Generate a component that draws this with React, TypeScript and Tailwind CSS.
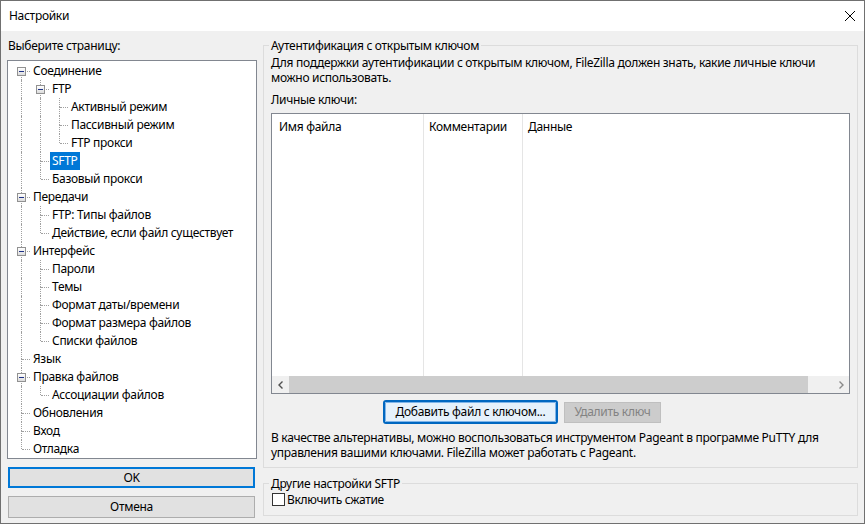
import React from "react";

type Item = { t: string; l: number; box?: boolean; sel?: boolean };

const items: Item[] = [
  { t: "Соединение", l: 0, box: true },
  { t: "FTP", l: 1, box: true },
  { t: "Активный режим", l: 2 },
  { t: "Пассивный режим", l: 2 },
  { t: "FTP прокси", l: 2 },
  { t: "SFTP", l: 1, sel: true },
  { t: "Базовый прокси", l: 1 },
  { t: "Передачи", l: 0, box: true },
  { t: "FTP: Типы файлов", l: 1 },
  { t: "Действие, если файл существует", l: 1 },
  { t: "Интерфейс", l: 0, box: true },
  { t: "Пароли", l: 1 },
  { t: "Темы", l: 1 },
  { t: "Формат даты/времени", l: 1 },
  { t: "Формат размера файлов", l: 1 },
  { t: "Списки файлов", l: 1 },
  { t: "Язык", l: 0 },
  { t: "Правка файлов", l: 0, box: true },
  { t: "Ассоциации файлов", l: 1 },
  { t: "Обновления", l: 0 },
  { t: "Вход", l: 0 },
  { t: "Отладка", l: 0 },
];

function hasLaterSibling(i: number, level: number): boolean {
  for (let j = i + 1; j < items.length; j++) {
    if (items[j].l < level) return false;
    if (items[j].l === level) return true;
  }
  return false;
}

function ancestorIndex(i: number, level: number): number {
  for (let j = i; j >= 0; j--) {
    if (items[j].l === level) return j;
  }
  return -1;
}

function TreeRow({ item, i }: { item: Item; i: number }) {
  const cells = [];
  for (let k = 0; k < item.l; k++) {
    const a = ancestorIndex(i, k);
    const cont = hasLaterSibling(a, k);
    cells.push(
      <div key={k} className="relative w-[19px] h-full shrink-0">
        {cont && (
          <div className="absolute left-[10px] top-0 h-[18px] border-l border-dotted border-[#a0a0a0]" />
        )}
      </div>
    );
  }
  const next = hasLaterSibling(i, item.l);
  const first = i === 0;
  cells.push(
    <div key="own" className="relative w-[19px] h-full shrink-0">
      {!first && (
        <div className="absolute left-[10px] top-0 h-[9px] border-l border-dotted border-[#a0a0a0]" />
      )}
      {next && (
        <div className="absolute left-[10px] top-[9px] h-[9px] border-l border-dotted border-[#a0a0a0]" />
      )}
      <div className="absolute left-[11px] top-[9px] w-[8px] border-t border-dotted border-[#a0a0a0]" />
      {item.box && (
        <div className="absolute left-[6px] top-[5px] w-[9px] h-[9px] border border-[#919191] bg-gradient-to-b from-white to-[#dcdcdc] flex items-center justify-center">
          <div className="w-[5px] h-[1px] bg-[#1e3287]" />
        </div>
      )}
    </div>
  );
  return (
    <div className="flex h-[18px] items-center">
      {cells}
      <span
        className={`ml-[1px] px-[2px] h-[18px] leading-[18px] whitespace-nowrap ${
          item.sel ? "bg-[#0078d7] text-white" : "text-black"
        }`}
      >
        {item.t}
      </span>
    </div>
  );
}

function Chevron({ dir, color }: { dir: "l" | "r"; color: string }) {
  return (
    <svg width="8" height="8" viewBox="0 0 8 8">
      {dir === "l" ? (
        <path d="M5.5 0.5 L2 4 L5.5 7.5" fill="none" stroke={color} strokeWidth="1.4" />
      ) : (
        <path d="M2.5 0.5 L6 4 L2.5 7.5" fill="none" stroke={color} strokeWidth="1.4" />
      )}
    </svg>
  );
}

export default function App() {
  return (
    <div className="w-[865px] h-[524px] border border-[#707070] flex flex-col font-['Noto_Sans',sans-serif] text-[12px] tracking-[-0.3px] text-black select-none">
      {/* Title bar */}
      <div className="h-[30px] bg-white flex items-center justify-between pl-[8px] pr-[9px] shrink-0">
        <span className="leading-[16px]">Настройки</span>
        <svg width="10" height="10" viewBox="0 0 10 10">
          <path d="M0 0 L10 10 M10 0 L0 10" stroke="#000" strokeWidth="1" />
        </svg>
      </div>
      {/* Body */}
      <div className="flex-1 bg-[#f0f0f0] flex px-[6px] pt-[7px] gap-[6px]">
        {/* Left */}
        <div className="w-[250px] flex flex-col shrink-0">
          <div className="h-[16px] leading-[16px] pl-[1px]">Выберите страницу:</div>
          <div className="mt-[6px] h-[399px] border border-[#828790] bg-white pl-[3px] pt-[1px] overflow-hidden">
            {items.map((it, i) => (
              <TreeRow key={i} item={it} i={i} />
            ))}
          </div>
          <div className="ml-[1px] mt-[8px] w-[247px] h-[21px] border-2 border-[#0078d7] bg-[#e1e1e1] flex items-center justify-center">
            OK
          </div>
          <div className="ml-[1px] mt-[8px] w-[247px] h-[22px] border border-[#adadad] bg-[#e1e1e1] flex items-center justify-center">
            Отмена
          </div>
        </div>
        {/* Right */}
        <div className="w-[595px] flex flex-col shrink-0">
          <fieldset className="border border-[#dcdcdc] pl-[7px] pr-[7px] pb-[7px]">
            <legend className="-ml-[2px] px-[2px] leading-[15px]">Аутентификация с открытым ключом</legend>
            <div className="mt-[2px] leading-[15px]">
              Для поддержки аутентификации с открытым ключом, FileZilla должен знать, какие личные ключи
              <br />
              можно использовать.
            </div>
            <div className="mt-[7px] leading-[15px]">Личные ключи:</div>
            <div className="mt-[6px] h-[281px] border border-[#828790] bg-white flex flex-col">
              <div className="flex-1 flex">
                <div className="w-[151px] pl-[7px] pt-[5px] leading-[16px]">Имя файла</div>
                <div className="w-[99px] border-l border-[#e5e5e5] pl-[5px] pt-[5px] leading-[16px]">Комментарии</div>
                <div className="flex-1 border-l border-[#e5e5e5] pl-[5px] pt-[5px] leading-[16px]">Данные</div>
              </div>
              <div className="h-[17px] bg-[#f0f0f0] flex items-stretch">
                <div className="w-[17px] flex items-center justify-center">
                  <Chevron dir="l" color="#505050" />
                </div>
                <div className="w-[519px] bg-[#cdcdcd]" />
                <div className="flex-1" />
                <div className="w-[17px] flex items-center justify-center">
                  <Chevron dir="r" color="#8a8a8a" />
                </div>
              </div>
            </div>
            <div className="mt-[6px] flex items-center gap-[6px] pl-[112px]">
              <div className="w-[175px] h-[24px] border-2 border-[#0067c0] rounded-[3px] bg-[#e5f1fb] flex items-center justify-center">
                <div className="w-full h-full border border-[#7fb4e8] rounded-[1px] flex items-center justify-center">
                  Добавить файл с ключом...
                </div>
              </div>
              <div className="w-[97px] h-[21px] border border-[#bfbfbf] bg-[#cccccc] text-[#838383] flex items-center justify-center">
                Удалить ключ
              </div>
            </div>
            <div className="mt-[6px] leading-[15px]">
              В качестве альтернативы, можно воспользоваться инструментом Pageant в программе PuTTY для
              <br />
              управления вашими ключами. FileZilla может работать с Pageant.
            </div>
          </fieldset>
          <fieldset className="mt-[8px] border border-[#dcdcdc] pl-[7px] pr-[7px] pb-[8px]">
            <legend className="-ml-[2px] px-[2px] leading-[15px]">Другие настройки SFTP</legend>
            <div className="mt-[1px] h-[15px] flex items-center ml-[1px]">
              <div className="w-[13px] h-[13px] border border-[#333333] bg-white" />
              <span className="ml-[2px] leading-[15px]">Включить сжатие</span>
            </div>
          </fieldset>
        </div>
      </div>
    </div>
  );
}
